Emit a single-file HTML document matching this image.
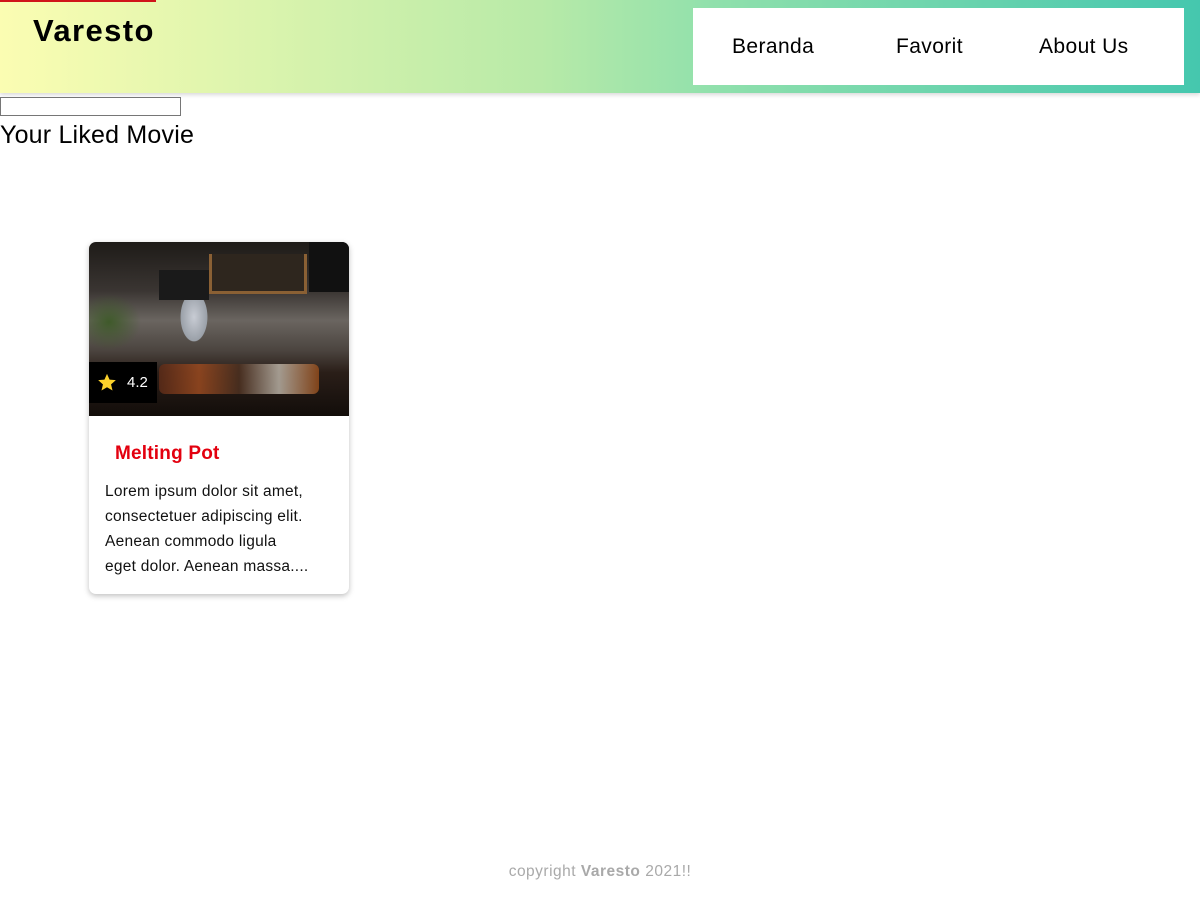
<!DOCTYPE html>
<html><head><meta charset="utf-8"><style>
*{box-sizing:border-box}
body{margin:0;width:1200px;height:900px;position:relative;font-family:"Liberation Sans",sans-serif;background:#fff;overflow:hidden}
header{position:absolute;left:0;top:0;width:1200px;height:93px;background:linear-gradient(90deg,#fbfdb2 0%,#b8eaa8 45%,#8fe0ac 60%,#45c7ae 100%);box-shadow:0 2px 4px rgba(0,0,0,.15)}
.redline{position:absolute;left:0;top:0;width:156px;height:2px;background:#d0141a}
.logo{position:absolute;left:33px;top:13px;font-size:31px;font-weight:bold;color:#000;letter-spacing:1.4px}
nav{position:absolute;left:693px;top:8px;width:491px;height:77px;background:#fff}
nav span{position:absolute;top:27px;font-size:21px;color:#000;letter-spacing:.4px}
input{position:absolute;left:0;top:97px;width:181px;height:19px;border:1px solid #767676;padding:0}
h2{position:absolute;left:0;top:121px;margin:0;font-size:25px;font-weight:normal;letter-spacing:.2px}
.card{position:absolute;left:89px;top:242px;width:260px;height:352px;border-radius:7px;background:#fff;box-shadow:0 2px 6px rgba(0,0,0,.25);overflow:hidden}
.img{position:absolute;left:0;top:0;width:260px;height:174px;background:
radial-gradient(ellipse 22px 40px at 105px 75px,#c8ccd4 0,#9aa0a8 60%,transparent 62%),
radial-gradient(ellipse 40px 35px at 20px 80px,#3f5a2a 0,transparent 80%),
linear-gradient(180deg,#1e1b18 0,#3a3532 28%,#6a6560 45%,#4c4540 62%,#2a1e18 75%,#120d0a 100%)}
.shelf{position:absolute;left:120px;top:12px;width:98px;height:40px;border:3px solid #8a6034;border-top:none;background:#2e261e}
.board{position:absolute;left:70px;top:28px;width:50px;height:30px;background:#1a1a1a}
.board2{position:absolute;left:220px;top:0;width:40px;height:50px;background:#111}
.food{position:absolute;left:70px;top:122px;width:160px;height:30px;background:linear-gradient(90deg,#5b2b18,#9a4a20,#4c3020,#b8b0a4,#904a1a);opacity:.85;border-radius:6px}
.rate{position:absolute;left:0;top:120px;width:68px;height:41px;background:#000;color:#fff;font-size:15px}
.rate svg{position:absolute;left:8px;top:11px}
.rate b{position:absolute;left:38px;top:12px;font-weight:normal}
.title{position:absolute;left:26px;top:201px;color:#e3000f;font-size:19px;font-weight:bold;letter-spacing:.2px}
.desc{position:absolute;left:16px;top:237px;white-space:nowrap;font-size:15.5px;line-height:25px;color:#111;letter-spacing:.25px}
footer{position:absolute;left:0;width:1200px;top:863px;text-align:center;color:#a9a9a9;font-size:15.5px;letter-spacing:.5px}
</style></head><body>
<header><div class="redline"></div><div class="logo">Varesto</div>
<nav><span style="left:39px">Beranda</span><span style="left:203px">Favorit</span><span style="left:346px">About Us</span></nav></header>
<input type="text">
<h2>Your Liked Movie</h2>
<div class="card">
<div class="img"><div class="board"></div><div class="shelf"></div><div class="board2"></div><div class="food"></div>
<div class="rate"><svg width="20" height="19" viewBox="0 0 24 23"><path d="M12 1l3.1 7 7.6.7-5.8 5 1.8 7.5L12 17.3 5.3 21.2l1.8-7.5-5.8-5 7.6-.7z" fill="#fbd12b"/></svg><b>4.2</b></div></div>
<div class="title">Melting Pot</div>
<div class="desc">Lorem ipsum dolor sit amet,<br>consectetuer adipiscing elit.<br>Aenean commodo ligula<br>eget dolor. Aenean massa....</div>
</div>
<footer>copyright <b>Varesto</b> 2021!!</footer>
</body></html>
